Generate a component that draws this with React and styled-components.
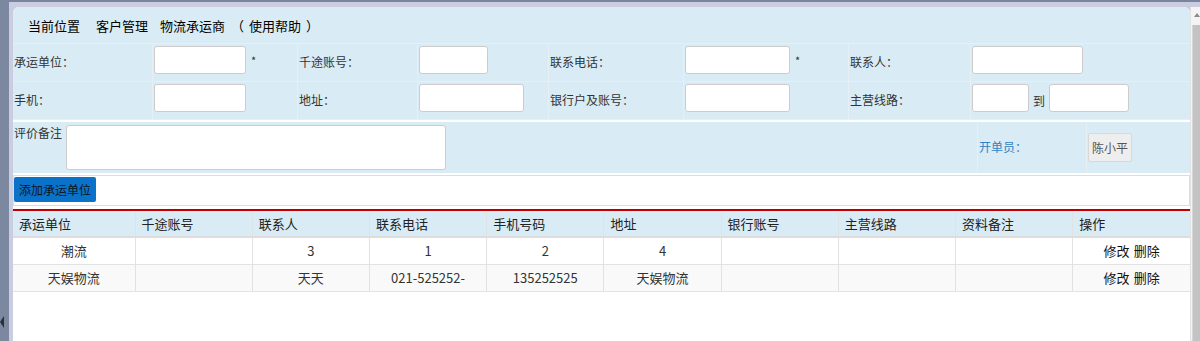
import React from "react";
import styled, { createGlobalStyle } from "styled-components";

const GlobalStyle = createGlobalStyle`
  html, body {
    margin: 0;
    padding: 0;
    background: #c9cddf;
  }
  body {
    font-family: "Noto Sans CJK SC", "Noto Sans", sans-serif;
    font-size: 12px;
    color: #333;
  }
  * { box-sizing: border-box; }
`;

const Shell = styled.div`
  display: flex;
  height: 341px;
  overflow: hidden;
`;

const Rail = styled.div`
  width: 9px;
  background: #7c88a0;
  display: flex;
  flex-direction: column;
  justify-content: flex-end;
  padding-bottom: 13px;
`;

const RailArrow = styled.span`
  width: 0;
  height: 0;
  border-top: 6px solid transparent;
  border-bottom: 6px solid transparent;
  border-right: 4px solid #2b2f3a;
`;

const Frame = styled.div`
  flex: 1;
  display: flex;
  border-top: 2px solid #7a849e;
  padding: 5px 0 0 4px;
  background: #c9cddf;
`;

const Content = styled.div`
  flex: 1;
  background: #fff;
  border-radius: 6px 6px 0 0;
  overflow: hidden;
`;

const ScrollBar = styled.div`
  width: 10px;
  background: #f4f4f4;
  border-left: 1px solid #e2e2e2;
  display: flex;
  flex-direction: column;
  align-items: flex-end;
`;

const ScrollArrow = styled.span`
  margin: 6px 0 8px;
  width: 0;
  height: 0;
  border-left: 3px solid transparent;
  border-right: 3px solid transparent;
  border-bottom: 4px solid #8a8a8a;
`;

const ScrollThumb = styled.div`
  width: 8px;
  flex: 1;
  background: #c3c3c3;
  border-left: 1px solid #d6d6d6;
`;

const Breadcrumb = styled.div`
  height: 36px;
  display: flex;
  align-items: center;
  padding-left: 15px;
  background: #d9ecf5;
  font-size: 13px;
  color: #000;
`;

const Crumb = styled.span`
  margin-right: ${(p) => p.$gap || 0}px;
`;

const HelpText = styled.span`
  padding: 0 5px;
`;

const FormGrid = styled.div`
  display: grid;
  grid-template-columns: 140px 145px 120px 131px 135px 165px 122px 1fr;
  background: #d9ecf5;
  border-top: 1px solid #e6eff4;
`;

const Cell = styled.div`
  height: 38px;
  display: flex;
  align-items: ${(p) => (p.$label ? "center" : "flex-start")};
  padding: ${(p) => (p.$label ? "0 0 2px 1px" : "2px 0 0 1px")};
  border-right: 1px solid #e6eff4;
  border-bottom: 1px solid #e6eff4;
  font-size: 12px;
  color: #333;
  &:nth-child(8n) {
    border-right: none;
  }
`;

const Input = styled.input`
  width: ${(p) => p.$w}px;
  height: 28px;
  border: 1px solid #cccccc;
  border-radius: 3px;
  background: #fff;
  padding: 0 4px;
  font: inherit;
  outline: none;
`;

const Star = styled.span`
  margin: 6px 0 0 5px;
  font-size: 11px;
  color: #333;
`;

const To = styled.span`
  margin: 8px 4px 0 4px;
  font-size: 12px;
  color: #333;
`;

const Divider = styled.div`
  height: ${(p) => p.$h}px;
  background: #fff;
`;

const NoteRow = styled.div`
  display: grid;
  grid-template-columns: 965px 109px 1fr;
  height: 51px;
  background: #d9ecf5;
`;

const NoteCell = styled.div`
  display: flex;
  align-items: ${(p) => p.$align || "center"};
  gap: 4px;
  padding: ${(p) => p.$pad || "0"};
  border-right: 1px solid #e6eff4;
  &:last-child {
    border-right: none;
  }
`;

const NoteLabel = styled.span`
  font-size: 12px;
  color: #333;
  line-height: 14px;
  padding-top: 2px;
`;

const TextArea = styled.textarea`
  width: 380px;
  height: 45px;
  margin-top: 1px;
  border: 1px solid #cccccc;
  border-radius: 3px;
  background: #fff;
  resize: none;
  outline: none;
`;

const BlueLabel = styled.span`
  font-size: 12px;
  color: #2f83c4;
`;

const GrayButton = styled.button`
  height: 29px;
  padding: 0 3px;
  border: 1px solid #d8d8d8;
  border-radius: 2px;
  background: #eeeeee;
  font-family: inherit;
  font-size: 12px;
  color: #555;
`;

const ActionBar = styled.div`
  height: 31px;
  border: 1px solid #dddddd;
  background: #fff;
  padding: 1px 0 0 0;
`;

const PrimaryButton = styled.button`
  height: 25px;
  width: 82px;
  padding: 0;
  border: none;
  border-radius: 2px;
  background: #0b72c9;
  font-family: inherit;
  font-size: 12px;
  color: #0b1520;
`;

const Table = styled.table`
  width: 100%;
  table-layout: fixed;
  border-collapse: collapse;
  border-top: 2px solid #c00000;
  margin-top: 3px;
  font-size: 13px;
`;

const Col = styled.col`
  width: ${(p) => (p.$w ? `${p.$w}px` : "auto")};
`;

const Th = styled.th`
  height: 27px;
  padding: 0 0 0 6px;
  text-align: left;
  font-weight: normal;
  color: #222;
  background: #d9ecf5;
  border-right: 1px solid #e2e2e2;
  border-bottom: 2px solid #dddddd;
  &:last-child {
    border-right: none;
  }
`;

const Tr = styled.tr`
  background: ${(p) => (p.$alt ? "#f9f9f9" : "#fff")};
`;

const Td = styled.td`
  height: 27px;
  padding: 0;
  text-align: center;
  color: #333;
  border-right: 1px solid #e2e2e2;
  border-bottom: 1px solid #e2e2e2;
  &:last-child {
    border-right: none;
  }
`;

const Link = styled.span`
  color: #111;
  cursor: pointer;
  & + & {
    margin-left: 4px;
  }
`;

const headers = ["承运单位", "千途账号", "联系人", "联系电话", "手机号码", "地址", "银行账号", "主营线路", "资料备注", "操作"];

const rows = [
  ["潮流", "", "3", "1", "2", "4", "", "", ""],
  ["天娱物流", "", "天天", "021-525252-", "135252525", "天娱物流", "", "", ""],
];

export default function App() {
  return (
    <>
      <GlobalStyle />
      <Shell>
        <Rail>
          <RailArrow />
        </Rail>
        <Frame>
          <Content>
            <Breadcrumb>
              <Crumb $gap={16}>当前位置</Crumb>
              <Crumb $gap={12}>客户管理</Crumb>
              <Crumb $gap={6}>物流承运商</Crumb>
              <Crumb>（<HelpText>使用帮助</HelpText>）</Crumb>
            </Breadcrumb>

            <FormGrid>
              <Cell $label>承运单位：</Cell>
              <Cell><Input $w={92} /><Star>*</Star></Cell>
              <Cell $label>千途账号：</Cell>
              <Cell><Input $w={69} /></Cell>
              <Cell $label>联系电话：</Cell>
              <Cell><Input $w={105} /><Star>*</Star></Cell>
              <Cell $label>联系人：</Cell>
              <Cell><Input $w={111} /></Cell>

              <Cell $label>手机：</Cell>
              <Cell><Input $w={92} /></Cell>
              <Cell $label>地址：</Cell>
              <Cell><Input $w={105} /></Cell>
              <Cell $label>银行户及账号：</Cell>
              <Cell><Input $w={105} /></Cell>
              <Cell $label>主营线路：</Cell>
              <Cell><Input $w={57} /><To>到</To><Input $w={80} /></Cell>
            </FormGrid>

            <Divider $h={2} />

            <NoteRow>
              <NoteCell $align="flex-start" $pad="2px 0 0 1px">
                <NoteLabel>评价备注</NoteLabel>
                <TextArea />
              </NoteCell>
              <NoteCell $pad="0 0 3px 1px">
                <BlueLabel>开单员：</BlueLabel>
              </NoteCell>
              <NoteCell $pad="0 0 0 1px">
                <GrayButton>陈小平</GrayButton>
              </NoteCell>
            </NoteRow>

            <Divider $h={2} />

            <ActionBar>
              <PrimaryButton>添加承运单位</PrimaryButton>
            </ActionBar>

            <Table>
              <colgroup>
                <Col $w={122} />
                {headers.slice(1).map((h) => (
                  <Col key={h} />
                ))}
              </colgroup>
              <thead>
                <tr>
                  {headers.map((h) => (
                    <Th key={h}>{h}</Th>
                  ))}
                </tr>
              </thead>
              <tbody>
                {rows.map((r, i) => (
                  <Tr key={i} $alt={i % 2 === 1}>
                    {r.map((c, j) => (
                      <Td key={j}>{c}</Td>
                    ))}
                    <Td>
                      <Link>修改</Link>
                      <Link>删除</Link>
                    </Td>
                  </Tr>
                ))}
              </tbody>
            </Table>
          </Content>
          <ScrollBar>
            <ScrollArrow />
            <ScrollThumb />
          </ScrollBar>
        </Frame>
      </Shell>
    </>
  );
}
